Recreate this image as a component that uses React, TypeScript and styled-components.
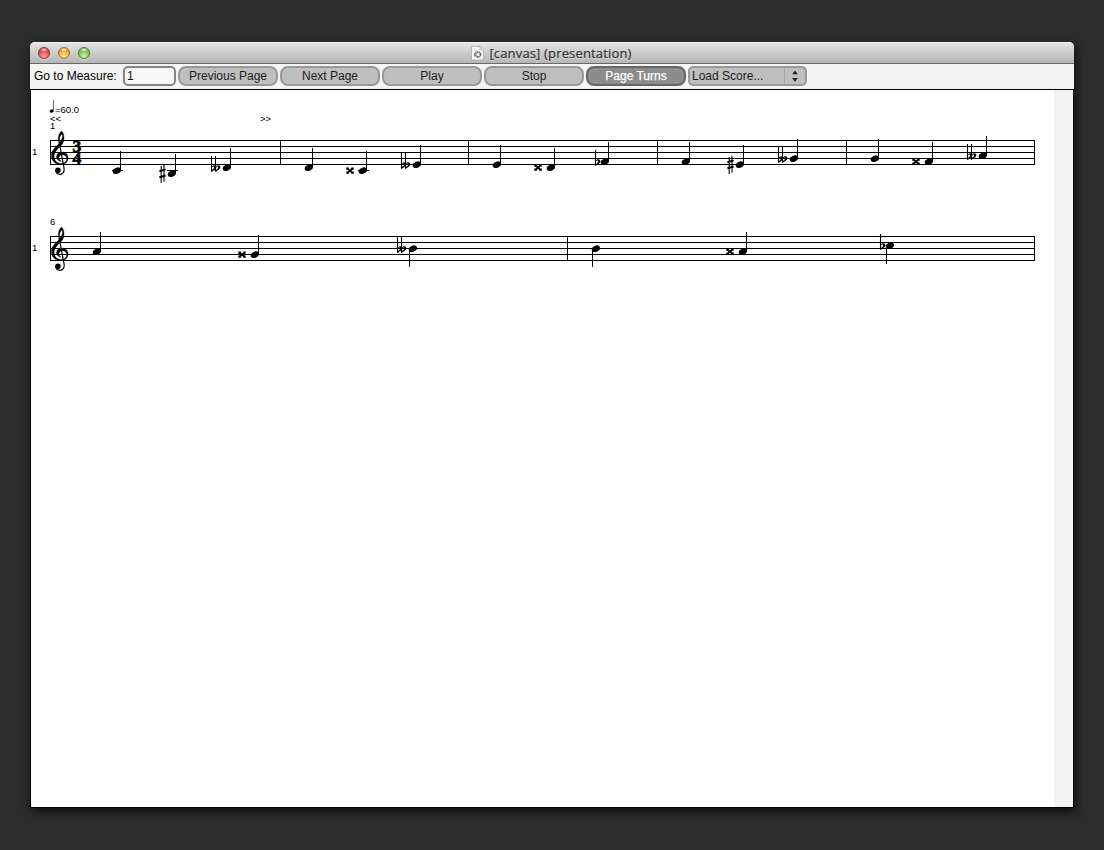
import React from 'react';
import styled, { createGlobalStyle } from 'styled-components';

const GlobalStyle = createGlobalStyle`
  body { margin: 0; background: #2d2d2d; }
  * { box-sizing: border-box; }
`;

const Desktop = styled.main`
  height: 850px;
  padding: 42px 30px 42px;
  background: #2d2d2d;
  overflow: hidden;
  font-family: 'Liberation Sans', Arial, sans-serif;
`;

const Window = styled.section`
  display: flex;
  flex-direction: column;
  height: 766px;
  border-radius: 5px 5px 0 0;
  background: #f4f4f4;
  box-shadow: 2px 4px 12px rgba(0, 0, 0, 0.75);
`;

const TitleBar = styled.header`
  display: grid;
  grid-template-columns: 100px 1fr 100px;
  align-items: center;
  height: 22px;
  border-radius: 5px 5px 0 0;
  border-bottom: 1px solid #686868;
  background: linear-gradient(#f4f4f4 0, #e0e0e0 2px, #b6b6b6 100%);
`;

const Lights = styled.div`
  display: flex;
  gap: 8px;
  padding-left: 8px;
`;

const Light = styled.span<{ $edge: string; $mid: string; $glow: string }>`
  width: 12px;
  height: 12px;
  border-radius: 50%;
  border: 1px solid ${(p) => p.$edge};
  background:
    radial-gradient(ellipse 4px 2px at 50% 18%, rgba(255, 255, 255, 0.85), transparent),
    radial-gradient(circle at 50% 85%, ${(p) => p.$glow}, ${(p) => p.$mid} 65%);
  box-shadow: 0 1px 0 rgba(255, 255, 255, 0.4);
`;

const Title = styled.h1`
  display: flex;
  align-items: center;
  justify-content: center;
  gap: 5px;
  margin: 0;
  padding-right: 1px;
  font: 400 13px/20px 'Open Sans', sans-serif;
  letter-spacing: 0.16px;
  color: #333;
  -webkit-text-stroke: 0.2px #333;
  text-shadow: 0 1px 0 rgba(255, 255, 255, 0.4);
  white-space: nowrap;
`;

const Toolbar = styled.div`
  display: flex;
  align-items: flex-start;
  gap: 2px;
  height: 25px;
  padding: 2px 0 0 4px;
  background: #f4f4f4;
`;

const Label = styled.label`
  width: 87px;
  font-size: 12px;
  line-height: 20px;
  color: #000;
  white-space: nowrap;
`;

const MeasureInput = styled.input`
  width: 53px;
  height: 20px;
  padding: 0 2px;
  border: 2px solid #858585;
  border-radius: 5px;
  background: #f6f6f6;
  font: 12px 'Liberation Sans', Arial, sans-serif;
  color: #111;
  outline: 0;
`;

const Button = styled.button<{ $active?: boolean }>`
  width: 100px;
  height: 20px;
  padding: 0;
  border: 2px solid ${(p) => (p.$active ? '#666' : '#999')};
  border-radius: 8px;
  background: ${(p) => (p.$active ? '#8c8c8c' : '#bfbfbf')};
  font: 12px/16px 'Liberation Sans', Arial, sans-serif;
  color: ${(p) => (p.$active ? '#fff' : '#1c1c1c')};
  -webkit-text-stroke: ${(p) => (p.$active ? '0.25px #fff' : '0')};
`;

const Picker = styled.button`
  display: flex;
  justify-content: space-between;
  width: 119px;
  height: 20px;
  padding: 0 0 0 2px;
  border: 2px solid #999;
  border-radius: 5px;
  background: #bfbfbf;
  font: 12px/16px 'Liberation Sans', Arial, sans-serif;
  color: #1c1c1c;
`;

const Stepper = styled.span`
  display: flex;
  align-items: center;
  justify-content: center;
  width: 21px;
  height: 16px;
  padding-right: 1px;
  border-left: 1px solid #a4a4a4;
`;

const ScorePane = styled.div`
  flex: 1;
  display: flex;
  border: 1px solid #000;
  background: #fff;
`;

const Page = styled.div`
  flex: 1;
`;

const Gutter = styled.div`
  width: 19px;
  background: #f3f3f3;
`;

const Sheet = styled.svg`
  display: block;
  font-family: 'Liberation Sans', Arial, sans-serif;
  font-size: 9.5px;
`;

const Meter = styled.text`
  font: 700 16px 'Liberation Serif', serif;
  stroke: #000;
  stroke-width: 0.6px;
`;

type Accidental = 'sharp' | 'flat' | 'doubleFlat' | 'doubleSharp';
interface NoteData {
  x: number;
  y: number;
  acc?: Accidental;
  down?: boolean;
  ledger?: boolean;
}

const firstSystem: NoteData[] = [
  { x: 117, y: 170, ledger: true },
  { x: 172, y: 173, acc: 'sharp', ledger: true },
  { x: 227, y: 167, acc: 'doubleFlat' },
  { x: 309, y: 167 },
  { x: 363, y: 170, acc: 'doubleSharp', ledger: true },
  { x: 417, y: 164, acc: 'doubleFlat' },
  { x: 497, y: 164 },
  { x: 551, y: 167, acc: 'doubleSharp' },
  { x: 605, y: 161, acc: 'flat' },
  { x: 686, y: 161 },
  { x: 740, y: 164, acc: 'sharp' },
  { x: 794, y: 158, acc: 'doubleFlat' },
  { x: 875, y: 158 },
  { x: 929, y: 161, acc: 'doubleSharp' },
  { x: 983, y: 155, acc: 'doubleFlat' },
];

const secondSystem: NoteData[] = [
  { x: 97, y: 251 },
  { x: 255, y: 254, acc: 'doubleSharp' },
  { x: 413, y: 248, acc: 'doubleFlat', down: true },
  { x: 596, y: 248, down: true },
  { x: 743, y: 251, acc: 'doubleSharp' },
  { x: 890, y: 245, acc: 'flat', down: true },
];

const FlatSign = ({ x, y }: { x: number; y: number }) => (
  <g transform={`translate(${x} ${y})`}>
    <path d="M.5-11V4.6" stroke="#000" strokeWidth="1.1" />
    <path d="M.5-.2C2.2-2.6 5.4-2.2 5.4.2 5.4 2.2 2.8 3.2.5 5V3.3C2 2.3 3.2 1.4 3.2.3 3.2-.8 1.7-.7.5.8Z" />
  </g>
);

const AccidentalSign = ({ kind, x, y }: { kind: Accidental; x: number; y: number }) => {
  switch (kind) {
    case 'flat':
      return <FlatSign x={x - 10} y={y} />;
    case 'doubleFlat':
      return (
        <>
          <FlatSign x={x - 16} y={y} />
          <FlatSign x={x - 12} y={y} />
        </>
      );
    case 'sharp':
      return (
        <g transform={`translate(${x - 9.5} ${y})`} stroke="#000" fill="none">
          <path d="M-1.3-7V10M1.5-8.2V8.8" strokeWidth="1.1" />
          <path d="M-3.1-1.8 3.1-3.6M-3.1 4.3 3.1 2.5" strokeWidth="2" />
        </g>
      );
    default:
      return (
        <g transform={`translate(${x - 13} ${y + 0.7})`}>
          <path d="M-2.8-2.4 2.8 2.4M-2.8 2.4 2.8-2.4" stroke="#000" strokeWidth="1.8" />
          <path d="M-3.7-3.1h2.5v2.2h-2.5ZM1.2-3.1h2.5v2.2H1.2ZM-3.7.9h2.5v2.2h-2.5ZM1.2.9h2.5v2.2H1.2Z" />
        </g>
      );
  }
};

const Note = ({ x, y, acc, down, ledger }: NoteData) => (
  <g>
    {ledger && <rect x={x - 5} y={170} width={11} height={1} />}
    <ellipse cx={x - 0.2} cy={y + 0.6} rx="4.3" ry="3" transform={`rotate(-24 ${x} ${y + 0.5})`} />
    <rect x={down ? x - 4 : x + 3} y={down ? y : y - 19} width={1} height={19} shapeRendering="crispEdges" />
    {acc && <AccidentalSign kind={acc} x={x} y={y} />}
  </g>
);

const Clef = ({ y }: { y: number }) => (
  <g transform={`translate(50 ${y})`}>
    <path
      d="M8.9 3.5C7.6-2.5 8.7-7 11.7-9 14.5-6 15 0 12.2 4.2 9.8 7.6 4.6 10.4 4.2 16.2 4 20.3 7 23.5 11 23.4 14.5 23.3 16.7 21.5 16.7 18.7 16.7 16 14.6 14.6 12.2 14.8 9.6 15 8.4 17.5 9.3 19.2 9.8 20.3 10.6 20.9 11.6 21.3 8.5 21.1 6.3 19 6.5 16.4 6.8 13.3 9.6 11.7 12.4 12 16 12.4 18.4 15 18.2 18.5 17.8 22.4 14.6 24.7 10.4 24.6 5 24.5 1.3 20.6 1.4 15.3 1.6 9.2 7.2 6.2 10 2.2 12.2-.9 13.3-4 11.9-5.8 10-5.3 9 .1 9.9 3.5Z"
      stroke="#000"
      strokeWidth=".3"
    />
    <path d="M9.3 3 14 27.6C14.9 32 12.5 34.3 9.8 34.3 7.7 34.3 6 33 6 30.8" fill="none" stroke="#000" strokeWidth="1.2" />
    <circle cx="7.9" cy="30.2" r="2.8" />
  </g>
);

const Staff = ({ y, bars }: { y: number; bars: number[] }) => (
  <g shapeRendering="crispEdges">
    {[0, 6, 12, 18, 24].map((dy) => (
      <rect key={dy} x={50} y={y + dy} width={985} height={1} />
    ))}
    {bars.map((x) => (
      <rect key={x} x={x} y={y} width={1} height={25} />
    ))}
  </g>
);

const Score = () => (
  <Sheet width="1023" height="300" viewBox="31 90 1023 300">
    <ellipse cx="51.8" cy="111" rx="2.3" ry="1.6" transform="rotate(-20 52 111)" />
    <path d="M53.5 100V111" stroke="#667" strokeWidth="1" />
    <text x="55" y="113">=60.0</text>
    <text x="50" y="122">&lt;&lt;</text>
    <text x="260" y="122">&gt;&gt;</text>
    <text x="50" y="129">1</text>
    <text x="32" y="155">1</text>
    <Staff y={140} bars={[50, 280, 468, 657, 846, 1034]} />
    <Clef y={140} />
    <Meter transform="translate(72.4 152) scale(1.1 1)">3</Meter>
    <Meter transform="translate(72.4 164) scale(1.1 1)">4</Meter>
    {firstSystem.map((n) => <Note key={n.x} {...n} />)}

    <text x="50" y="225">6</text>
    <text x="32" y="251">1</text>
    <Staff y={236} bars={[50, 567, 1034]} />
    <Clef y={236} />
    {secondSystem.map((n) => <Note key={n.x} {...n} />)}
  </Sheet>
);

const DocumentIcon = () => (
  <svg width="13" height="16" viewBox="0 0 13 16">
    <path d="M.5 1.5h8.5l3.5 3.5v10H.5Z" fill="#f7f7f7" stroke="#aaa" strokeWidth=".8" />
    <path d="M9 1.5V5h3.5" fill="#ddd" stroke="#aaa" strokeWidth=".6" />
    <circle cx="7" cy="9.5" r="2.5" fill="none" stroke="#666" strokeWidth="1.8" strokeDasharray="1.5 .5" />
    <path d="M3.8 11.6a3.5 3.5 0 0 1 .2-3.8" fill="none" stroke="#4da3d8" strokeWidth="1.2" />
    <path d="M4.3 7.2A3.5 3.5 0 0 1 7 6" fill="none" stroke="#e3a04f" strokeWidth="1.1" />
  </svg>
);

export default function App() {
  return (
    <>
      <GlobalStyle />
      <Desktop>
        <Window>
          <TitleBar>
            <Lights>
              <Light $edge="#8e3034" $mid="#df4048" $glow="#ffa5a5" />
              <Light $edge="#9b672c" $mid="#e9a23b" $glow="#ffe891" />
              <Light $edge="#4b7b35" $mid="#79b853" $glow="#d2f7a5" />
            </Lights>
            <Title>
              <DocumentIcon />
              [canvas] (presentation)
            </Title>
          </TitleBar>
          <Toolbar>
            <Label htmlFor="measure">Go to Measure:</Label>
            <MeasureInput id="measure" defaultValue="1" />
            <Button>Previous Page</Button>
            <Button>Next Page</Button>
            <Button>Play</Button>
            <Button>Stop</Button>
            <Button $active>Page Turns</Button>
            <Picker>
              Load Score...
              <Stepper>
                <svg width="8" height="12" viewBox="0 0 8 12">
                  <path d="M1.2 4.2 4 .5l2.8 3.7ZM1.2 8 4 11.7 6.8 8Z" fill="#1c1c1c" />
                </svg>
              </Stepper>
            </Picker>
          </Toolbar>
          <ScorePane>
            <Page>
              <Score />
            </Page>
            <Gutter />
          </ScorePane>
        </Window>
      </Desktop>
    </>
  );
}
